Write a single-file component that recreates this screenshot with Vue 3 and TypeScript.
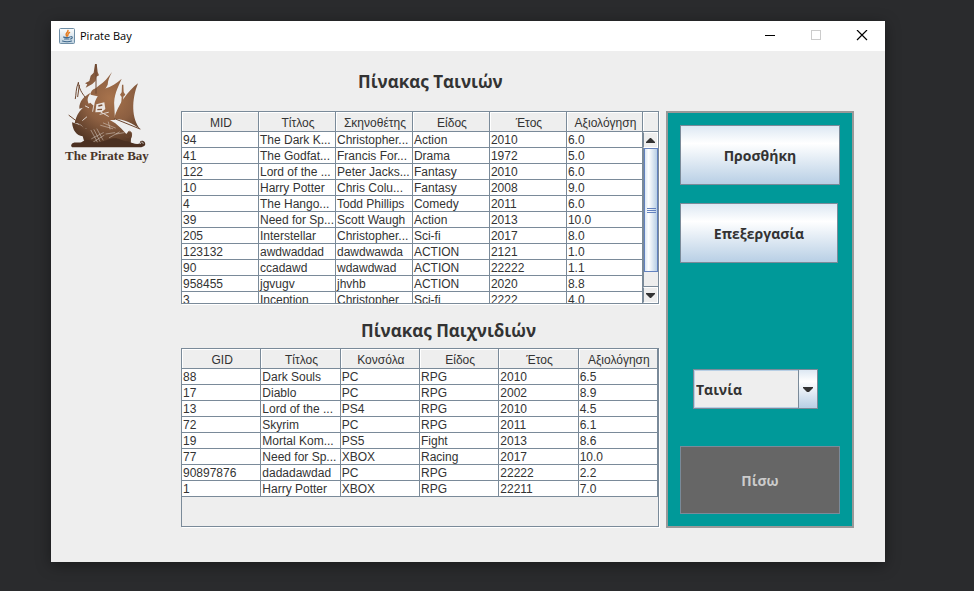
<script setup lang="ts">
import { ref } from 'vue'

type Row = string[]

const movieHeads: Row = ['MID', 'Τίτλος', 'Σκηνοθέτης', 'Είδος', 'Έτος', 'Αξιολόγηση']
const movies: Row[] = [
  ['94', 'The Dark K...', 'Christopher...', 'Action', '2010', '6.0'],
  ['41', 'The Godfat...', 'Francis For...', 'Drama', '1972', '5.0'],
  ['122', 'Lord of the ...', 'Peter Jacks...', 'Fantasy', '2010', '6.0'],
  ['10', 'Harry Potter', 'Chris Colu...', 'Fantasy', '2008', '9.0'],
  ['4', 'The Hango...', 'Todd Phillips', 'Comedy', '2011', '6.0'],
  ['39', 'Need for Sp...', 'Scott Waugh', 'Action', '2013', '10.0'],
  ['205', 'Interstellar', 'Christopher...', 'Sci-fi', '2017', '8.0'],
  ['123132', 'awdwaddad', 'dawdwawda', 'ACTION', '2121', '1.0'],
  ['90', 'ccadawd', 'wdawdwad', 'ACTION', '22222', '1.1'],
  ['958455', 'jgvugv', 'jhvhb', 'ACTION', '2020', '8.8'],
  ['3', 'Inception', 'Christopher', 'Sci-fi', '2222', '4.0'],
]

const gameHeads: Row = ['GID', 'Τίτλος', 'Κονσόλα', 'Είδος', 'Έτος', 'Αξιολόγηση']
const games: Row[] = [
  ['88', 'Dark Souls', 'PC', 'RPG', '2010', '6.5'],
  ['17', 'Diablo', 'PC', 'RPG', '2002', '8.9'],
  ['13', 'Lord of the ...', 'PS4', 'RPG', '2010', '4.5'],
  ['72', 'Skyrim', 'PC', 'RPG', '2011', '6.1'],
  ['19', 'Mortal Kom...', 'PS5', 'Fight', '2013', '8.6'],
  ['77', 'Need for Sp...', 'XBOX', 'Racing', '2017', '10.0'],
  ['90897876', 'dadadawdad', 'PC', 'RPG', '22222', '2.2'],
  ['1', 'Harry Potter', 'XBOX', 'RPG', '22211', '7.0'],
]

const kind = ref('Ταινία')
</script>

<template>
  <div class="desktop">
    <div class="window">
      <header class="titlebar">
        <svg class="app-icon" viewBox="0 0 16 16" aria-hidden="true">
          <defs>
            <linearGradient id="java-bg" x1="0" y1="0" x2="0" y2="1">
              <stop offset="0" stop-color="#fdfefe" />
              <stop offset="1" stop-color="#bcd0de" />
            </linearGradient>
          </defs>
          <rect x=".5" y=".5" width="15" height="15" rx="1" fill="url(#java-bg)" stroke="#6f8ea6" />
          <g fill="none" stroke="#e57a1c" stroke-width="1.500" stroke-linecap="round">
            <path d="M9 2.500C9.500 4.500 5.500 5 7.500 8" />
            <path d="M10.500 4.500C8 5.500 9.500 6.500 8.500 8" />
          </g>
          <g fill="none" stroke="#41698d" stroke-width="1.100" stroke-linecap="round">
            <path d="M4.500 9C5.500 9.800 9.500 9.800 11 9M12 8.500C14 8.500 13.500 10.500 11.500 11M5.500 11H10M3.500 13C6 14 10.500 14 12.500 13" />
          </g>
        </svg>
        <span class="app-name">Pirate Bay</span>
        <button class="win-btn" type="button" aria-label="Minimize">
          <svg viewBox="0 0 12 12"><path d="M1 5.500H11" stroke="#000" /></svg>
        </button>
        <button class="win-btn" type="button" aria-label="Maximize" disabled>
          <svg viewBox="0 0 12 12"><rect x="1.500" y=".5" width="9" height="9" fill="none" stroke="#ccc" /></svg>
        </button>
        <button class="win-btn" type="button" aria-label="Close">
          <svg viewBox="0 0 12 12"><path d="M1 0L11 10M11 0L1 10" stroke="#000" stroke-width="1.200" /></svg>
        </button>
      </header>

      <main class="content">
        <div class="logo">
          <svg class="ship" viewBox="9 9 264 255" aria-hidden="true">
            <defs>
              <radialGradient id="sail" gradientUnits="userSpaceOnUse" cx="150" cy="115" r="150">
                <stop offset="0" stop-color="#a8734c" />
                <stop offset=".5" stop-color="#8c5f41" />
                <stop offset="1" stop-color="#4e3322" />
              </radialGradient>
            </defs>
            <g fill="url(#sail)">
              <path d="M105 12H110L113 36 117 46 109 50 107 62 97 72 77 83 82 73 75 70 88 63 92 47 101 38Z" />
              <path d="M156 36C149 50 144 60 143 74C134 90 128 102 126 112L92 104C92 95 96 89 108 84L118 76C132 68 144 52 156 36Z" />
              <path d="M185 56C174 82 160 106 163 140L165 180H88L98 160 103 134C106 116 116 102 134 86C154 80 170 70 185 56Z" />
              <path d="M93 98C80 112 80 124 91 138L58 146C57 124 72 108 93 98Z" />
              <path d="M91 128L104 140 110 184 88 206H72C66 194 58 188 44 190C48 166 62 142 91 128Z" />
              <path d="M234 70C204 92 174 134 162 176C194 178 218 190 241 208C214 176 214 120 234 70Z" />
              <path d="M186 74H190L191 96 196 104 190 110 188 138 183 142 185 111 180 104 185 97Z" />
              <path d="M36 187C38 212 50 227 68 229L72 242 92 254H212L213 236C219 228 216 215 206 213L199 222 183 205 166 190 146 178H92L84 202 78 207C64 196 51 192 36 187Z" />
            </g>
            <g fill="none" stroke="#6d4730" stroke-width="3" stroke-linecap="round">
              <path d="M108 14V100M55 68C47 86 49 102 46 116M55 68C58 88 65 98 75 111M58 76L53 110M27 166L52 185L72 207M164 176L240 207M210 214C223 222 209 237 197 230" />
            </g>
            <path d="M109 133L133 127 136 147 125 156 106 157Z" fill="#ebe6e2" />
            <g fill="none" stroke="#7d533a" stroke-width="4">
              <path d="M115 138L127 135M112 149L126 148" />
            </g>
            <g fill="none" stroke="#e0d6cf" stroke-linecap="round">
              <path stroke-width="3" d="M120 163L145 157M122 156L145 169" />
              <path stroke-width="3" d="M101 138L98 154M76 138L86 143M68 181L80 171" />
              <path stroke-width="1.500" d="M93 211L112 246M102 209L120 244M111 207L129 240M95 236L130 218M100 246L132 226" />
              <path stroke-width="1.500" d="M122 196L158 206M130 189L166 204M145 186L150 207M138 222L164 218M148 233L178 216M168 222L192 218" />
            </g>
            <path d="M34 254C39 243 55 250 64 247C80 235 95 240 104 248C124 249 139 239 159 235C174 232 185 242 203 244C215 250 233 255 240 250C237 241 251 240 255 248C259 258 247 262 236 262H40C35 262 32 258 34 254Z" fill="#4b3021" />
            <path d="M241 252C240 244 252 245 249 252" fill="none" stroke="#ededed" stroke-width="2" />
          </svg>
          <span class="logo-name">The Pirate Bay</span>
        </div>

        <div class="tables">
          <h2 id="movies-title">Πίνακας Ταινιών</h2>
          <div class="pane movies">
            <div class="view">
              <table aria-labelledby="movies-title">
                <colgroup>
                  <col v-for="n in 5" :key="n" class="even" />
                  <col />
                </colgroup>
                <thead>
                  <tr><th v-for="h in movieHeads" :key="h" scope="col">{{ h }}</th></tr>
                </thead>
                <tbody>
                  <tr v-for="row in movies" :key="row[0]">
                    <td v-for="(cell, i) in row" :key="i">{{ cell }}</td>
                  </tr>
                </tbody>
              </table>
            </div>
            <div class="scroll">
              <div class="corner"></div>
              <button class="step" type="button" aria-label="Scroll up">
                <svg viewBox="0 0 9 5"><path d="M4 0H5L9 4V5H0V4Z" fill="#333" /></svg>
              </button>
              <div class="track">
                <div class="thumb"><i></i><i></i><i></i></div>
              </div>
              <button class="step" type="button" aria-label="Scroll down">
                <svg viewBox="0 0 9 5"><path d="M0 0H9V1L5 5H4L0 1Z" fill="#333" /></svg>
              </button>
            </div>
          </div>

          <h2 id="games-title" class="second">Πίνακας Παιχνιδιών</h2>
          <div class="pane games">
            <div class="view">
              <table aria-labelledby="games-title">
                <thead>
                  <tr><th v-for="h in gameHeads" :key="h" scope="col">{{ h }}</th></tr>
                </thead>
                <tbody>
                  <tr v-for="row in games" :key="row[0]">
                    <td v-for="(cell, i) in row" :key="i">{{ cell }}</td>
                  </tr>
                </tbody>
              </table>
            </div>
          </div>
        </div>

        <aside class="panel">
          <button class="action" type="button">Προσθήκη</button>
          <button class="action edit" type="button">Επεξεργασία</button>
          <div class="combo">
            <select v-model="kind" aria-label="Κατηγορία">
              <option>Ταινία</option>
              <option>Παιχνίδι</option>
            </select>
            <span class="arrow" aria-hidden="true">
              <svg viewBox="0 0 10 5"><path d="M0 0H10V1L6 5H4L0 1Z" fill="#333" /></svg>
            </span>
          </div>
          <button class="action back" type="button">Πίσω</button>
        </aside>
      </main>
    </div>
  </div>
</template>

<style>
body {
  margin: 0;
  background: #2a2b2d;
}
</style>

<style scoped>
.desktop {
  box-sizing: border-box;
  min-height: 100vh;
  padding: 21px 89px 29px 51px;
  display: flex;
  color: #333;
  font-family: "Liberation Sans", Arial, sans-serif;
  font-size: 12px;
}
.window {
  flex: 1;
  min-width: 0;
  display: flex;
  flex-direction: column;
  background: #eee;
  box-shadow: 0 3px 14px rgba(0, 0, 0, 0.4);
}
.titlebar {
  height: 30px;
  display: flex;
  align-items: center;
  background: #fff;
  padding-left: 8px;
}
.app-icon {
  width: 16px;
  height: 16px;
  margin-right: 5px;
}
.app-name {
  flex: 1;
  color: #000;
  font-family: "Open Sans", "Noto Sans", sans-serif;
  font-size: 11px;
  line-height: 16px;
}
.win-btn {
  width: 46px;
  height: 30px;
  padding: 0;
  border: 0;
  background: none;
  display: grid;
  place-items: center;
}
.win-btn svg {
  width: 12px;
  height: 12px;
}
.content {
  flex: 1;
  display: grid;
  grid-template-columns: 118px minmax(0, 1fr) 188px;
  padding: 0 31px 34px 12px;
}
.logo {
  padding-top: 12px;
  width: 88px;
  text-align: center;
}
.ship {
  display: block;
  width: 88px;
  height: 85px;
}
.logo-name {
  display: block;
  color: #49352a;
  font-family: "Liberation Serif", serif;
  font-size: 13px;
  font-weight: bold;
  line-height: 16px;
  white-space: nowrap;
}
.tables {
  display: flex;
  flex-direction: column;
  padding-right: 6px;
}
h2 {
  margin: 0;
  padding: 2px 0 0 177px;
  font-family: "Open Sans", "Noto Sans", sans-serif;
  font-size: 17px;
  font-weight: bold;
  line-height: 58px;
  white-space: nowrap;
}
h2.second {
  padding-top: 10px;
  padding-left: 180px;
  line-height: 34px;
}
.pane {
  box-sizing: border-box;
  display: flex;
  border: 1px solid #7a8a99;
  margin-right: 1px;
  box-shadow: 1px 1px 0 #fff;
  overflow: hidden;
}
.movies {
  height: 193px;
}
.games {
  flex: 1;
  margin-bottom: 1px;
}
.view {
  flex: 1;
  min-width: 0;
}
table {
  width: 100%;
  table-layout: fixed;
  border-collapse: separate;
  border-spacing: 0;
}
.even {
  width: 16.7%;
}
th,
td {
  box-sizing: border-box;
  padding: 1px 1px 0;
  border-right: 1px solid #7a8a99;
  border-bottom: 1px solid #7a8a99;
  overflow: hidden;
  white-space: nowrap;
}
th {
  height: 20px;
  padding: 3px 0 0 2px;
  font-weight: normal;
  line-height: 16px;
  text-align: center;
  box-shadow: inset 1px 1px 0 #fff;
}
td {
  height: 16px;
  line-height: 14px;
  background: #fff;
}
.scroll {
  width: 15px;
  display: flex;
  flex-direction: column;
}
.corner {
  box-sizing: border-box;
  height: 20px;
  border-bottom: 1px solid #7a8a99;
  box-shadow: inset 1px 1px 0 #fff;
}
.step {
  height: 16px;
  padding: 0;
  border: 1px solid #fff;
  border-left-color: #7a8a99;
  background: #eee;
  display: grid;
  place-items: center;
}
.step svg {
  width: 9px;
  height: 5px;
}
.track {
  flex: 1;
  border-left: 1px solid #7a8a99;
  border-bottom: 1px solid #7a8a99;
}
.thumb {
  box-sizing: border-box;
  height: 90%;
  border: 1px solid #6382bf;
  background: linear-gradient(90deg, #dbe7f3, #fff 30%, #b8cfe5);
  display: flex;
  flex-direction: column;
  align-items: center;
  justify-content: center;
  gap: 1px;
}
.thumb i {
  width: 9px;
  height: 1px;
  background: #6382bf;
}
.panel {
  box-sizing: border-box;
  margin-top: 60px;
  padding: 12px;
  border: 2px solid #999;
  background: #099;
  display: flex;
  flex-direction: column;
}
.action,
select {
  color: #333;
  font-family: "Open Sans", "Noto Sans", sans-serif;
  font-size: 14px;
  font-weight: bold;
}
.action {
  height: 60px;
  padding: 0;
  border: 1px solid #7a8a99;
  background: linear-gradient(#dde8f3, #fff 30%, #b8cfe5);
}
.edit {
  margin: 18px 2px 0 0;
}
.combo {
  display: grid;
  width: 125px;
  height: 40px;
  box-sizing: border-box;
  margin: auto 0 37px 13px;
  border: 1px solid #7a8a99;
}
select,
.arrow {
  grid-area: 1 / 1;
}
select {
  appearance: none;
  border: 1px solid #b8cfe5;
  border-radius: 0;
  padding: 0 20px 0 1px;
  background: #eee;
}
.arrow {
  justify-self: end;
  width: 18px;
  border-left: 1px solid #7a8a99;
  background: linear-gradient(#dde8f3, #fff 30%, #b8cfe5);
  display: grid;
  place-items: center;
  pointer-events: none;
}
.arrow svg {
  width: 10px;
  height: 5px;
}
.back {
  height: 68px;
  background: #666;
  color: #ccc;
}
</style>
